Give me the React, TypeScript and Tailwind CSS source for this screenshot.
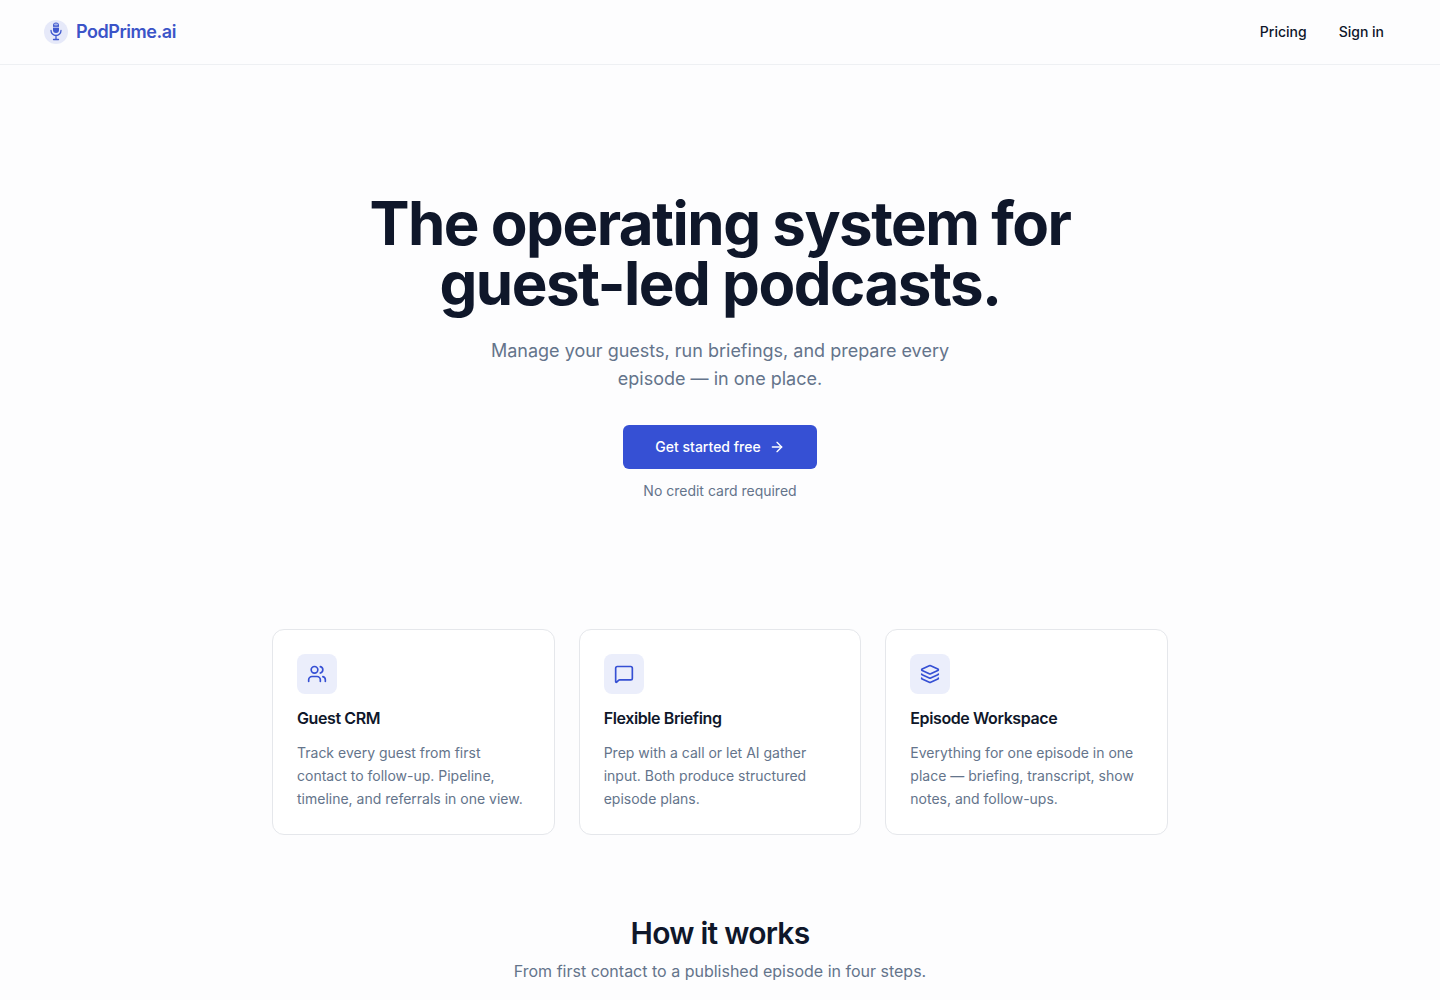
import { ArrowRight, Layers, MessageSquare, Users } from "lucide-react";

const features = [
  {
    icon: Users,
    title: "Guest CRM",
    text: "Track every guest from first contact to follow-up. Pipeline, timeline, and referrals in one view.",
  },
  {
    icon: MessageSquare,
    title: "Flexible Briefing",
    text: "Prep with a call or let AI gather input. Both produce structured episode plans.",
  },
  {
    icon: Layers,
    title: "Episode Workspace",
    text: "Everything for one episode in one place — briefing, transcript, show notes, and follow-ups.",
  },
];

// logo: pale disc with a ribbed microphone
const LogoMark = () => (
  <svg viewBox="0 0 24 24" className="h-6 w-6">
    <circle cx="12" cy="12" r="12" fill="#e6e9f9" />
    <rect x="9" y="2.5" width="6" height="10.5" rx="3" fill="#3f58cf" />
    <rect x="10" y="3.6" width="4" height="2" rx="1" fill="#aab6ea" />
    <path d="M9 7.3h6" stroke="#e6e9f9" strokeWidth="0.8" />
    <path d="M7 10.5a5 5 0 0 0 10 0M12 15.5v3.5M9.5 19.5h5" fill="none" stroke="#3f58cf" strokeWidth="1.3" strokeLinecap="round" />
  </svg>
);

export default function App() {
  return (
    <div className="min-h-screen bg-[#fdfdfe] font-['Inter',sans-serif] text-[#0f172a]">
      {/* nav */}
      <header className="flex h-[65px] items-center justify-between border-b border-[#eef0f3] pl-11 pr-14">
        <div className="flex items-center gap-2">
          <LogoMark />
          <span className="text-lg font-semibold tracking-tight text-[#3b54c8]">PodPrime.ai</span>
        </div>
        <nav className="flex items-center gap-8 text-sm font-medium text-[#0f172a]">
          <a>Pricing</a>
          <a>Sign in</a>
        </nav>
      </header>

      {/* hero */}
      <section className="flex flex-col items-center pt-[128px] text-center">
        <h1 className="text-6xl leading-[60px] font-bold tracking-tight text-[#0f172a]">
          The operating system for
          <br />
          guest-led podcasts.
        </h1>
        <p className="mt-6 w-[512px] text-lg leading-7 text-[#64748b]">
          Manage your guests, run briefings, and prepare every episode — in one place.
        </p>
        <button className="mt-8 flex h-11 items-center gap-2 rounded-md bg-[#3650d4] px-8 text-sm font-medium text-white">
          Get started free
          <ArrowRight className="h-4 w-4" />
        </button>
        <p className="mt-3 text-sm leading-5 text-[#64748b]">No credit card required</p>
      </section>

      {/* features */}
      <section className="mx-auto mt-[128px] grid w-[896px] grid-cols-3 gap-6">
        {features.map((f) => (
          <div key={f.title} className="rounded-xl border border-[#e5e7eb] bg-white p-6">
            <div className="flex h-10 w-10 items-center justify-center rounded-lg bg-[#ebeefb]">
              <f.icon className="h-5 w-5 text-[#3650d4]" />
            </div>
            <h3 className="mt-3 text-base leading-6 font-semibold tracking-tight text-[#0f172a]">{f.title}</h3>
            <p className="mt-[11px] text-sm leading-[23px] text-[#64748b]">{f.text}</p>
          </div>
        ))}
      </section>

      {/* how it works */}
      <section className="mt-20 text-center">
        <h2 className="text-3xl leading-9 font-semibold tracking-tight text-[#0f172a]">How it works</h2>
        <p className="mt-2 text-base leading-6 text-[#64748b]">From first contact to a published episode in four steps.</p>
      </section>
    </div>
  );
}
